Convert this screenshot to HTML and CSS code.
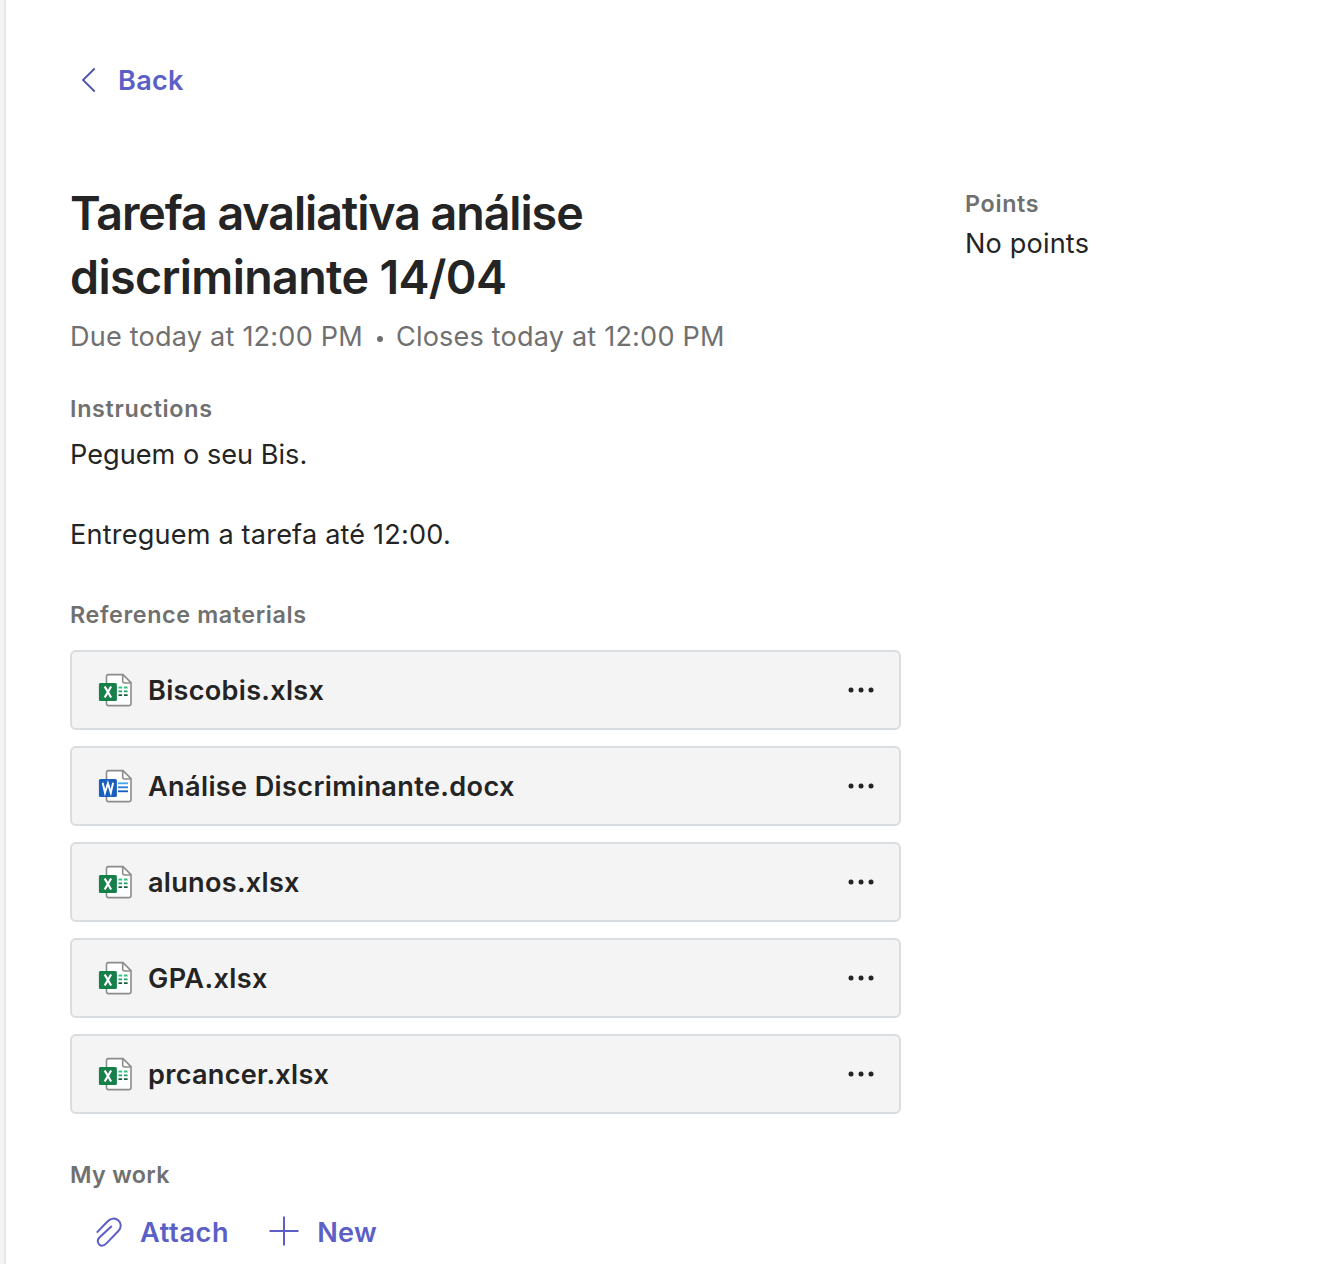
FILE: index.html
```html
<!DOCTYPE html>
<html lang="en">
<head>
<meta charset="utf-8">
<title>Assignment</title>
<link rel="stylesheet" href="styles.css">
</head>
<body>
<svg class="defs" aria-hidden="true">
  <symbol id="page" viewBox="0 0 36 36">
    <path d="M11.500 2.600H26l8 8v21a2 2 0 0 1-2 2H11.500a2 2 0 0 1-2-2v-27a2 2 0 0 1 2-2z" fill="#fff" stroke="#8c8c8c" stroke-width="1.600"/>
    <path d="M25.700 3v6a2 2 0 0 0 2 2h6" fill="none" stroke="#8c8c8c" stroke-width="1.600"/>
  </symbol>
  <symbol id="xlsx" viewBox="0 0 36 36">
    <use href="#page"/>
    <path d="M21.500 15.500h3.600M27 15.500h3.600" stroke="#33c481" stroke-width="1.800"/>
    <path d="M21.500 19.300h3.600M27 19.300h3.600" stroke="#21a366" stroke-width="1.800"/>
    <path d="M21.500 23.200h3.600M27 23.200h3.600" stroke="#185c37" stroke-width="1.800"/>
    <rect x="1.900" y="11" width="18" height="18" rx="1.500" fill="#17804a"/>
    <path d="M7.700 14.500l6.400 11M14.100 14.500l-6.400 11" stroke="#fff" stroke-width="2.200"/>
  </symbol>
  <symbol id="docx" viewBox="0 0 36 36">
    <use href="#page"/>
    <path d="M21 15.300h10" stroke="#41a5ee" stroke-width="1.800"/>
    <path d="M21 19.300h10" stroke="#2b7cd3" stroke-width="1.800"/>
    <path d="M21 23.300h10" stroke="#185abd" stroke-width="1.800"/>
    <rect x="1.900" y="11" width="18" height="18" rx="1.500" fill="#185fc0"/>
    <path d="M5.700 14.700l2.300 10 2.900-9.500 2.900 9.500 2.300-10" fill="none" stroke="#fff" stroke-width="1.900"/>
  </symbol>
  <symbol id="more" viewBox="0 0 28 6">
    <circle cx="4" cy="3" r="2.500"/><circle cx="14" cy="3" r="2.500"/><circle cx="24" cy="3" r="2.500"/>
  </symbol>
</svg>
<div class="app">
  <div class="rail"></div>
  <main class="page">
    <a class="action back"><svg class="chevron" viewBox="0 0 16 26"><path d="M13.700 1.500L2 13l11.700 11.500"/></svg><span class="t-back">Back</span></a>
    <div class="columns">
      <section class="details">
        <h1 class="title"><span class="t-one">Tarefa avaliativa análise</span><br><span class="t-two">discriminante 14/04</span></h1>
        <p class="dates"><span class="t-due">Due today at 12:00 PM</span><span class="dot"></span><span class="t-close">Closes today at 12:00 PM</span></p>
        <h2 class="label"><span class="t-ins">Instructions</span></h2>
        <div class="text"><p class="t-peg">Peguem o seu Bis.</p><p class="t-ent">Entreguem a tarefa até 12:00.</p></div>
        <h2 class="label"><span class="t-ref">Reference materials</span></h2>
        <ul class="files">
          <li class="file"><svg class="icon"><use href="#xlsx"/></svg><span class="name">Biscobis.xlsx</span><svg class="more"><use href="#more"/></svg></li>
          <li class="file"><svg class="icon"><use href="#docx"/></svg><span class="name t-docx">Análise Discriminante.docx</span><svg class="more"><use href="#more"/></svg></li>
          <li class="file"><svg class="icon"><use href="#xlsx"/></svg><span class="name">alunos.xlsx</span><svg class="more"><use href="#more"/></svg></li>
          <li class="file"><svg class="icon"><use href="#xlsx"/></svg><span class="name t-gpa">GPA.xlsx</span><svg class="more"><use href="#more"/></svg></li>
          <li class="file"><svg class="icon"><use href="#xlsx"/></svg><span class="name">prcancer.xlsx</span><svg class="more"><use href="#more"/></svg></li>
        </ul>
        <h2 class="label"><span class="t-work">My work</span></h2>
        <div class="actions">
          <a class="action attach"><svg class="clip" viewBox="0 0 28 32"><path d="M1.800 16.600L12.200 5.700C15.500 2.300 20 1.600 23.200 4.200c3.300 2.700 3.300 7.200.4 10.500L11.200 27.600c-2.200 2.200-5 2.600-7 .8-2-1.900-1.900-4.700.2-6.900L16.800 10"/></svg><span class="t-attach">Attach</span></a>
          <a class="action new"><svg class="plus" viewBox="0 0 30 30"><path d="M15 .5v29M.5 15h29"/></svg><span class="t-new">New</span></a>
        </div>
      </section>
      <aside class="points"><h2 class="label"><span class="t-pts">Points</span></h2><p class="t-no">No points</p></aside>
    </div>
  </main>
</div>
</body>
</html>
```
FILE: styles.css
```css
* { box-sizing: border-box; }
body { margin: 0; background: #fff; color: #242424; font: 400 27.1px/40px Inter, "Liberation Sans", sans-serif; }
h1, h2, p, ul { margin: 0; padding: 0; list-style: none; }
.defs { position: absolute; width: 0; height: 0; }
.app { display: flex; height: 1264px; overflow: hidden; }
.rail { width: 6px; flex: none; background: #f4f4f4; border-right: 2px solid #e8e8e8; }
.page { flex: 1; padding: 60px 64px 0; }
.action { display: flex; align-items: center; height: 40px; color: #5b5fc7; font-weight: 600; }
.action span { padding-top: 2px; }
.action svg { fill: none; stroke: #5b5fc7; stroke-width: 2; flex: none; }
.action .chevron { width: 16px; height: 26px; margin: 0 21px 0 11px; stroke: #4f52b2; stroke-width: 1.8; }
.columns { display: flex; gap: 64px; padding-top: 82px; }
.details { width: 831px; flex: none; }
.title { margin-top: -1px; font-size: 46.6px; line-height: 64px; font-weight: 600; white-space: nowrap; }
.dates { display: flex; align-items: center; margin-top: 8px; color: #707070; white-space: nowrap; }
.dot { width: 6px; height: 6px; margin: 3px 13px 0 14px; border-radius: 50%; background: #707070; }
.label { font-size: 23.3px; line-height: 32px; font-weight: 600; color: #707070; }
.details .label { margin-top: 36px; }
.text { display: flex; flex-direction: column; gap: 40px; margin: 10px 0 44px; }
.files { display: flex; flex-direction: column; gap: 16px; margin: 19px 0 45px; }
.file { display: flex; align-items: center; height: 80px; padding: 0 24px 0 25px; border: 2px solid #d9dce0; border-radius: 6px; background: #f4f4f4; font-weight: 600; }
.icon { width: 36px; height: 36px; margin-right: 15px; }
.name { flex: 1; padding-top: 2px; letter-spacing: .29px; }
.more { width: 28px; height: 6px; fill: #242424; }
.actions { display: flex; gap: 40px; margin-top: 21px; padding-left: 25px; }
.clip { width: 28px; height: 32px; margin-right: 17px; }
.plus { width: 30px; height: 30px; margin: 0 18px 2px 0; }
.points { padding-top: 6px; }
.points p { margin-top: 4px; }

/* Tracking per text run */
.t-back { letter-spacing: .3px; }
.t-one { letter-spacing: -1.07px; }
.t-two { letter-spacing: -.64px; }
.t-due { letter-spacing: .2px; }
.t-close { letter-spacing: .18px; }
.t-ins { letter-spacing: .69px; }
.t-peg { letter-spacing: .03px; }
.t-ent { letter-spacing: .19px; }
.t-ref { letter-spacing: .62px; }
.t-docx { letter-spacing: .36px; }
.t-gpa { letter-spacing: .38px; }
.t-work { letter-spacing: .32px; }
.t-attach { letter-spacing: .65px; }
.t-new { letter-spacing: .2px; }
.t-pts { letter-spacing: .68px; }
.t-no { letter-spacing: .17px; }
```
